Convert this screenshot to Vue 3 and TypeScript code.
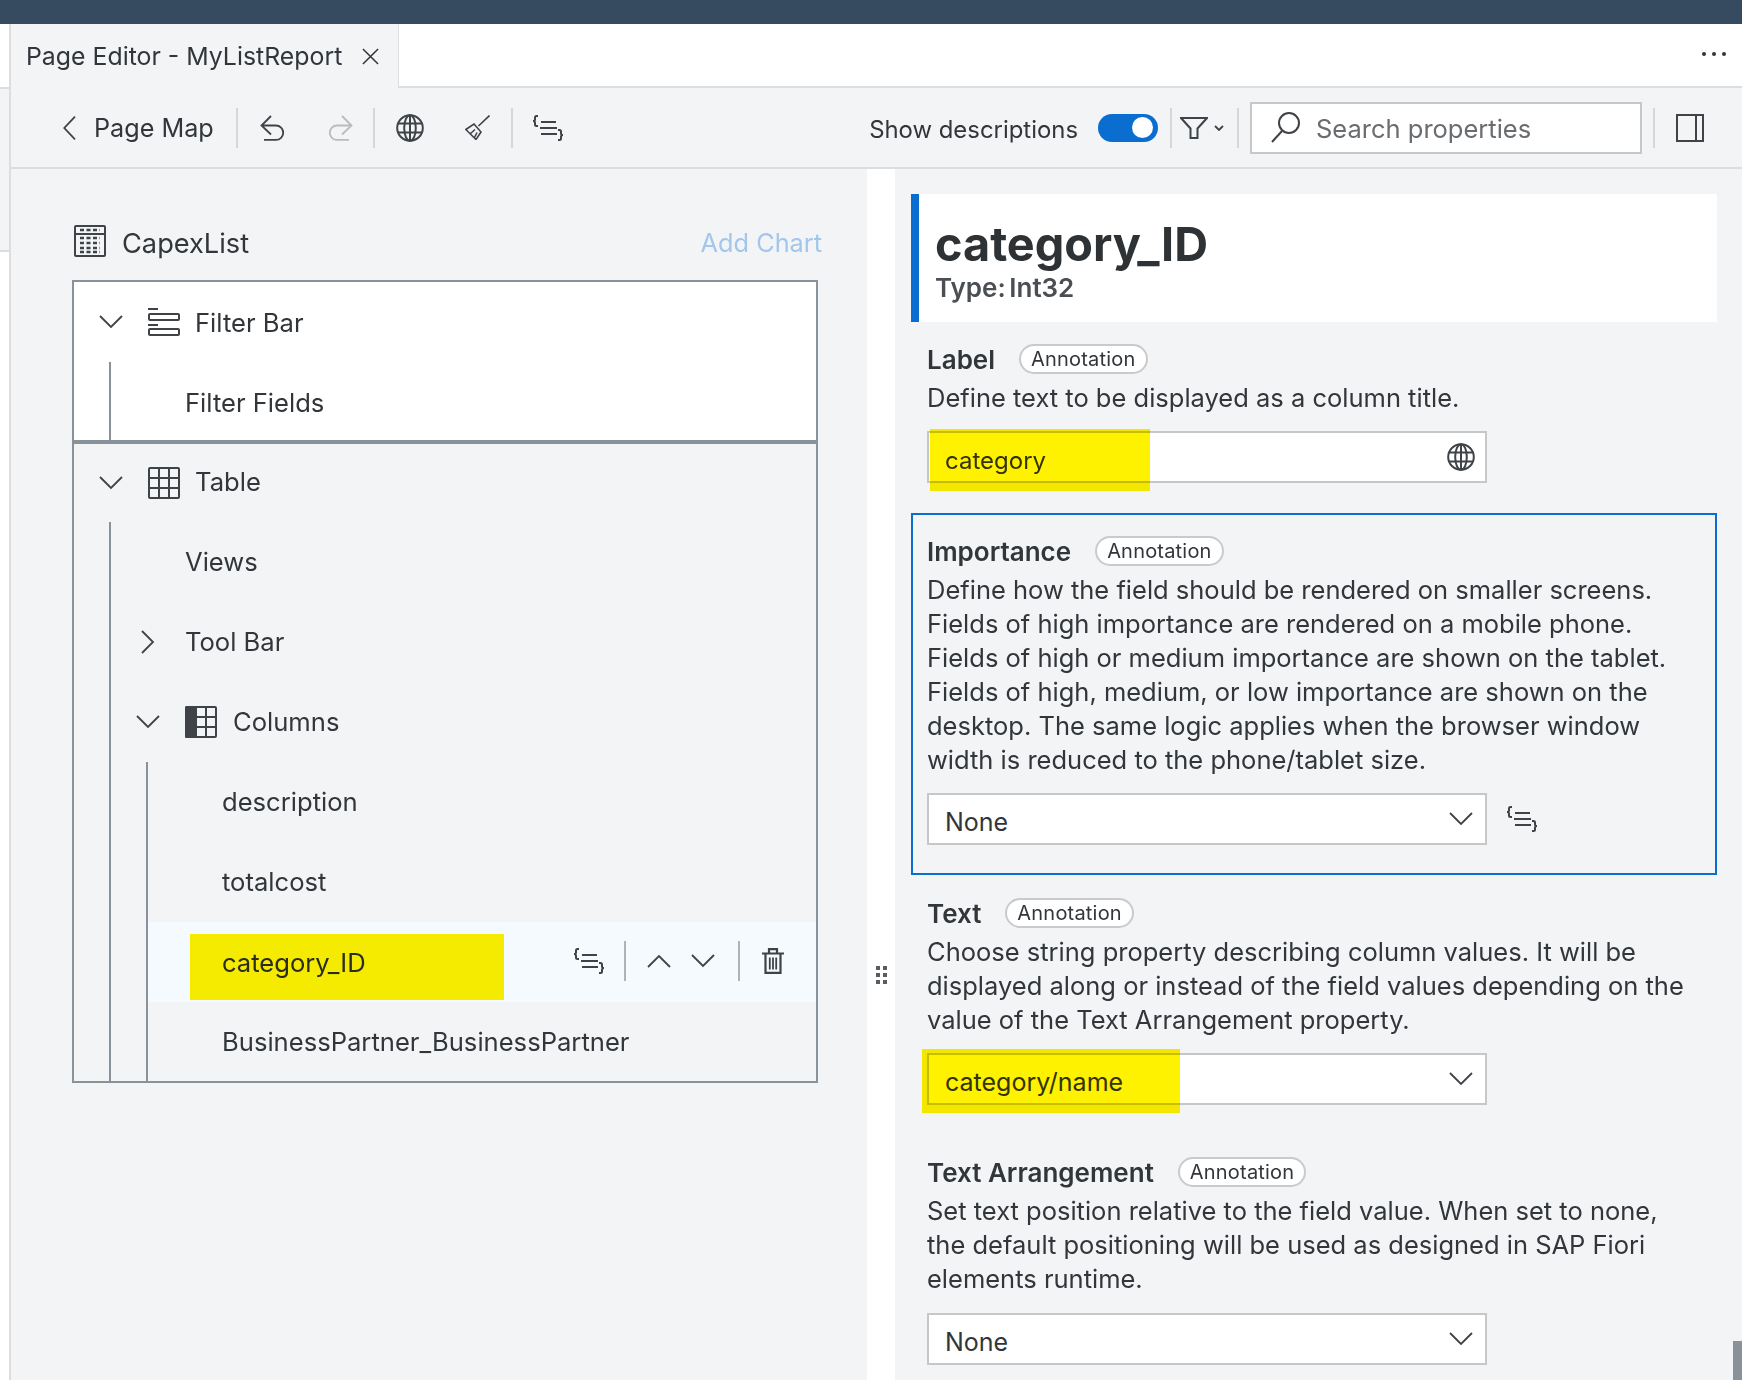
<script setup lang="ts">
interface Row {
  label: string
  depth: number
  chevron?: 'down' | 'right'
  icon?: string
  active?: boolean
}
const filterRows: Row[] = [
  { label: 'Filter Bar', depth: 0, chevron: 'down', icon: 'i-filterbar' },
  { label: 'Filter Fields', depth: 1 },
]
const tableRows: Row[] = [
  { label: 'Table', depth: 0, chevron: 'down', icon: 'i-table' },
  { label: 'Views', depth: 1 },
  { label: 'Tool Bar', depth: 1, chevron: 'right' },
  { label: 'Columns', depth: 1, chevron: 'down', icon: 'i-columns' },
  { label: 'description', depth: 2 },
  { label: 'totalcost', depth: 2 },
  { label: 'category_ID', depth: 2, active: true },
  { label: 'BusinessPartner_BusinessPartner', depth: 2 },
]
</script>

<template>
  <div class="page">
    <svg class="defs" width="0" height="0" aria-hidden="true">
      <symbol id="i-code" viewBox="0 0 32 26">
        <g fill="none" stroke="currentColor" stroke-width="2">
          <path d="M6 1H4.500C3.500 1 3 1.500 3 2.500v2C3 5.500 2 6 1 6c1 0 2 .5 2 1.500v2C3 10.500 3.500 11 4.500 11H6"/>
          <path d="M9 7h15M8 13h17M9 19h16"/>
          <path d="M26 15h1.500c1 0 1.500.5 1.500 1.500v2c0 1 1 1.500 2 1.500-1 0-2 .5-2 1.500v2c0 1-.5 1.500-1.500 1.500H26"/>
        </g>
      </symbol>
      <symbol id="i-globe" viewBox="0 0 28 28">
        <g fill="none" stroke="currentColor" stroke-width="2">
          <circle cx="14" cy="14" r="12.800"/>
          <ellipse cx="14" cy="14" rx="5.800" ry="12.800"/>
          <path d="M14 1.400v25.200M2.500 9.500h23M2.500 18.500h23"/>
        </g>
      </symbol>
      <symbol id="i-chev-down" viewBox="0 0 24 14">
        <path d="M1 1l11 11L23 1" fill="none" stroke="currentColor" stroke-width="1.800"/>
      </symbol>
      <symbol id="i-filterbar" viewBox="0 0 32 28">
        <g fill="none" stroke="currentColor" stroke-width="2">
          <path d="M0 1h10M0 17h10"/>
          <rect x="1" y="6" width="30" height="6" rx="1"/>
          <rect x="1" y="21" width="30" height="6" rx="1"/>
        </g>
      </symbol>
      <symbol id="i-table" viewBox="0 0 32 32">
        <g fill="none" stroke="currentColor" stroke-width="2">
          <rect x="1" y="1" width="30" height="30" rx="1"/>
          <path d="M11 1v30M21 1v30M1 11h30M1 21h30"/>
        </g>
      </symbol>
      <symbol id="i-columns" viewBox="0 0 32 32">
        <rect x="0" y="0" width="12" height="32" rx="1.500" fill="currentColor"/>
        <g fill="none" stroke="currentColor" stroke-width="2">
          <rect x="1" y="1" width="30" height="30" rx="1"/>
          <path d="M21 1v30M11 11h20M11 21h20"/>
        </g>
      </symbol>
    </svg>

    <div class="topbar"></div>

    <div class="workspace">
      <div class="gutter">
        <div class="gutter-top"></div>
        <div class="gutter-mid"></div>
      </div>

      <div class="editor">
        <div class="tabstrip">
          <div class="tab">
            <span>Page Editor - MyListReport</span>
            <svg class="tab-close" viewBox="0 0 18 18"><path d="M1 1l16 16M17 1L1 17" fill="none" stroke="currentColor" stroke-width="1.600"/></svg>
          </div>
          <div class="tab-rest">
            <span class="more"><i></i><i></i><i></i></span>
          </div>
        </div>

        <div class="toolbar">
          <div class="tools-left">
            <button class="backlink">
              <svg class="back-chev" viewBox="0 0 13 24"><path d="M12 .7L1.300 12 12 23.300" fill="none" stroke="currentColor" stroke-width="1.800"/></svg>
              <span>Page Map</span>
            </button>
            <span class="sep"></span>
            <svg class="undo" viewBox="0 0 24 26"><path d="M11 1L1.500 10.500 11 19.500M1.500 10.500H16a7.200 7.200 0 0 1 0 14.400H4" fill="none" stroke="currentColor" stroke-width="1.800"/></svg>
            <svg class="redo" viewBox="0 0 24 26"><path d="M13 1l9.500 9.500-9.500 9M22.500 10.500H8a7.200 7.200 0 0 0 0 14.400h12" fill="none" stroke="currentColor" stroke-width="1.800"/></svg>
            <span class="sep"></span>
            <svg class="globe"><use href="#i-globe"/></svg>
            <svg class="broom" viewBox="0 0 25 25"><path d="M24.500.5L13.500 11M.8 14.500L9 9l7 8-5 7.500zM5 19l5-4.500M9.500 22.500l2.500-5" fill="none" stroke="currentColor" stroke-width="1.600"/></svg>
            <span class="sep"></span>
            <svg class="code"><use href="#i-code"/></svg>
          </div>

          <div class="tools-right">
            <span class="show">Show descriptions</span>
            <span class="toggle"><span class="knob"></span></span>
            <span class="sep"></span>
            <span class="funnel">
              <svg class="funnel-icon" viewBox="0 0 28 22"><path d="M1 1h26L17.500 11.500V21h-7V11.500z" fill="none" stroke="currentColor" stroke-width="2"/></svg>
              <svg class="funnel-chev" viewBox="0 0 10 6"><path d="M1 1l4 4 4-4" fill="none" stroke="currentColor" stroke-width="1.800"/></svg>
            </span>
            <span class="sep"></span>
            <label class="search">
              <svg class="search-icon" viewBox="0 0 29 31"><g fill="none" stroke="currentColor" stroke-width="2"><circle cx="18" cy="11" r="10"/><path d="M11 19L1 30"/></g></svg>
              <span>Search properties</span>
            </label>
            <span class="sep"></span>
            <svg class="panel" viewBox="0 0 28 28"><g fill="none" stroke="currentColor" stroke-width="2"><rect x="1" y="1" width="26" height="26"/><path d="M20 1v26"/></g></svg>
          </div>
        </div>

        <div class="content">
          <section class="left">
            <div class="list-head">
              <svg class="list-icon" viewBox="0 0 32 32">
                <rect x="1" y="1" width="30" height="30" rx="1" fill="none" stroke="currentColor" stroke-width="2"/>
                <path d="M1 9h30" stroke="currentColor" stroke-width="2"/>
                <path d="M6 5h20M6 13h20M6 18h20M6 23h20M6 27h20" stroke="currentColor" stroke-width="2.500" stroke-dasharray="4 2.500" fill="none"/>
              </svg>
              <span class="list-title">CapexList</span>
              <span class="add-chart">Add Chart</span>
            </div>

            <div class="tree">
              <div class="group group-filter">
                <div v-for="r in filterRows" :key="r.label" class="row" :class="'depth-' + r.depth">
                  <span v-if="r.depth > 0" class="guide guide-1"></span>
                  <svg v-if="r.chevron === 'down'" class="chev"><use href="#i-chev-down"/></svg>
                  <svg v-if="r.icon" class="row-icon" :class="r.icon"><use :href="'#' + r.icon"/></svg>
                  <span class="row-label">{{ r.label }}</span>
                </div>
              </div>
              <div class="group group-table">
                <div
                  v-for="r in tableRows"
                  :key="r.label"
                  class="row"
                  :class="['depth-' + r.depth, { active: r.active, 'has-icon': r.icon, 'has-right': r.chevron === 'right' }]"
                >
                  <span v-if="r.depth > 0" class="guide guide-1"></span>
                  <span v-if="r.depth > 1" class="guide guide-2"></span>
                  <svg v-if="r.chevron === 'down'" class="chev"><use href="#i-chev-down"/></svg>
                  <svg v-if="r.chevron === 'right'" class="chev-right" viewBox="0 0 14 24"><path d="M1 1l11 11L1 23" fill="none" stroke="currentColor" stroke-width="1.800"/></svg>
                  <svg v-if="r.icon" class="row-icon"><use :href="'#' + r.icon"/></svg>
                  <span class="row-label">{{ r.label }}</span>
                  <template v-if="r.active">
                    <span class="row-mark"></span>
                    <span class="row-actions">
                      <svg class="act-code"><use href="#i-code"/></svg>
                      <span class="act-sep"></span>
                      <svg class="act-chev flip"><use href="#i-chev-down"/></svg>
                      <svg class="act-chev"><use href="#i-chev-down"/></svg>
                      <span class="act-sep"></span>
                      <svg class="act-trash" viewBox="0 0 22 26"><g fill="none" stroke="currentColor" stroke-width="2.200"><path d="M0 5.500h22M7 5V1.100h8V5M3.500 5.500v19.400h15V5.500"/><path d="M7.800 9.500v12M11 9.500v12M14.200 9.500v12" stroke-width="1.800"/></g></svg>
                    </span>
                  </template>
                </div>
              </div>
            </div>
          </section>

          <div class="splitter">
            <span class="grip"><i></i><i></i><i></i><i></i><i></i><i></i></span>
          </div>

          <section class="right">
            <header class="prop-head">
              <h1>category_ID</h1>
              <p>Type: <b>Int32</b></p>
            </header>

            <div class="prop prop-label">
              <div class="prop-title"><strong>Label</strong><span class="pill">Annotation</span></div>
              <p class="desc">Define text to be displayed as a column title.</p>
              <div class="field-row">
                <div class="field">
                  <span class="value-narrow">category</span>
                  <svg class="field-globe"><use href="#i-globe"/></svg>
                  <span class="mark mark-label"></span>
                </div>
              </div>
            </div>

            <div class="prop prop-focus">
              <div class="prop-title"><strong>Importance</strong><span class="pill">Annotation</span></div>
              <p class="desc">Define how the field should be rendered on smaller screens. Fields of high importance are rendered on a mobile phone. Fields of high or medium importance are shown on the tablet. Fields of high, medium, or low importance are shown on the desktop. The same logic applies when the browser window width is reduced to the phone/tablet size.</p>
              <div class="field-row">
                <div class="field">
                  <span>None</span>
                  <svg class="field-chev"><use href="#i-chev-down"/></svg>
                </div>
                <svg class="field-code"><use href="#i-code"/></svg>
              </div>
            </div>

            <div class="prop prop-text">
              <div class="prop-title"><strong>Text</strong><span class="pill">Annotation</span></div>
              <p class="desc">Choose string property describing column values. It will be displayed along or instead of the field values depending on the value of the Text Arrangement property.</p>
              <div class="field-row">
                <div class="field">
                  <span>category/name</span>
                  <svg class="field-chev"><use href="#i-chev-down"/></svg>
                  <span class="mark mark-text"></span>
                </div>
              </div>
            </div>

            <div class="prop prop-arr">
              <div class="prop-title"><strong>Text Arrangement</strong><span class="pill">Annotation</span></div>
              <p class="desc">Set text position relative to the field value. When set to none, the default positioning will be used as designed in SAP Fiori elements runtime.</p>
              <div class="field-row">
                <div class="field">
                  <span>None</span>
                  <svg class="field-chev"><use href="#i-chev-down"/></svg>
                </div>
              </div>
            </div>

            <span class="scroll-thumb"></span>
          </section>
        </div>
      </div>
    </div>
  </div>
</template>

<style>
html, body { margin: 0; background: #fff; }
</style>

<style scoped>
.page {
  width: 1742px;
  height: 1380px;
  overflow: hidden;
  display: flex;
  flex-direction: column;
  font-family: Inter, "Liberation Sans", sans-serif;
  font-size: 25px;
  color: #32363a;
  background: #fff;
}
.defs { position: absolute; }
svg { display: block; flex: none; }
.topbar { height: 24px; background: #364b60; flex: none; }
.workspace { flex: 1; display: flex; min-height: 0; }
.gutter { width: 11px; flex: none; }
.gutter-top { height: 63px; }
.gutter-mid { height: 161px; background: #f3f4f6; border-top: 2px solid #dcdddf; border-bottom: 2px solid #dcdddf; }
.editor { flex: 1; display: flex; flex-direction: column; min-width: 0; border-left: 2px solid #dcdddf; margin-left: -2px; }

.tabstrip { height: 64px; display: flex; flex: none; }
.tab {
  width: 388px;
  background: #f3f4f6;
  display: flex;
  align-items: center;
  padding-left: 15px;
  box-sizing: border-box;
  border-right: 1px solid #dcdddf;
  height: 64px;
  font-size: 24.85px;
}
.tab-close { width: 17px; height: 17px; margin-left: 20px; }
.tab-rest {
  flex: 1;
  border-bottom: 2px solid #dcdddf;
  display: flex;
  justify-content: flex-end;
  align-items: center;
  padding-right: 16px;
}
.more { display: flex; gap: 6px; margin-top: -2px; }
.more i { width: 4px; height: 4px; border-radius: 50%; background: #32363a; }

.toolbar {
  height: 81px;
  flex: none;
  box-sizing: border-box;
  background: #f3f4f6;
  border-bottom: 2px solid #dcdddf;
  display: flex;
  justify-content: space-between;
  align-items: center;
}
.tools-left, .tools-right { display: flex; align-items: center; }
.tools-left { padding-left: 52px; }
.tools-right { padding-right: 38px; }
.backlink {
  all: unset;
  display: flex;
  align-items: center;
  gap: 18px;
  margin-right: 22px;
  font-size: 25.2px;
}
.back-chev { width: 13px; height: 24px; color: #3f4347; }
.sep { width: 2px; height: 40px; background: #d6d7d9; flex: none; }
.undo { width: 24px; height: 26px; margin: 0 45px 0 22px; color: #3f4347; }
.redo { width: 24px; height: 26px; margin-right: 20px; color: #b9bbbd; }
.globe { width: 28px; height: 28px; margin: 0 41px 0 21px; color: #3f4347; }
.broom { width: 25px; height: 25px; margin-right: 21px; color: #3f4347; }
.code { width: 32px; height: 26px; margin-left: 19px; color: #3f4347; }

.show { margin-right: 20px; font-size: 23.9px; margin-top: 3px; }
.toggle {
  width: 60px;
  height: 28px;
  border-radius: 14px;
  background: #0a6ed1;
  display: flex;
  align-items: center;
  justify-content: flex-end;
  padding: 0 5px;
  box-sizing: border-box;
  margin-right: 12px;
}
.knob { width: 21px; height: 21px; border-radius: 50%; background: #fff; }
.funnel { display: flex; align-items: center; width: 65px; padding-left: 8px; box-sizing: border-box; gap: 6px; color: #3f4347; }
.funnel-icon { width: 28px; height: 22px; }
.funnel-chev { width: 10px; height: 6px; margin-top: 1px; }
.search {
  width: 392px;
  height: 52px;
  box-sizing: border-box;
  border: 2px solid #c6c7c9;
  background: #fff;
  margin: 0 11px;
  display: flex;
  align-items: center;
  padding-left: 19px;
  gap: 16px;
  color: #6a6d70;
  font-size: 25.5px;
}
.search span { padding-top: 2px; }
.search-icon { width: 29px; height: 31px; color: #3f4347; }
.panel { width: 28px; height: 28px; margin-left: 21px; color: #3f4347; }

.content { flex: 1; display: flex; min-height: 0; }
.left { width: 856px; flex: none; background: #f3f4f6; box-sizing: border-box; padding: 0 50px 0 61px; font-size: 25.6px; }
.list-head { display: flex; align-items: center; height: 111px; }
.list-icon { width: 32px; height: 32px; margin: 33px 16px 0 2px; color: #3f4347; }
.list-title { margin-top: 38px; font-size: 27.2px; }
.add-chart { margin-left: auto; margin-top: 36px; color: #a2c6ec; margin-right: -5px; font-size: 25.3px; }

.tree { border: 2px solid #89919a; width: 746px; box-sizing: border-box; }
.group-filter { background: #fff; border-bottom: 4px solid #89919a; }
.group-filter .row:last-child { height: 78px; padding-top: 3px; box-sizing: border-box; }
.group-table .row:first-child { height: 78px; }
.group-table .row:last-child { height: 79px; }
.group-table .row:first-child .row-label { top: -2px; }
.group-table .row:not(:first-child):not(.active):not(:last-child) .row-label { top: -1px; }
.row { position: relative; height: 80px; display: flex; align-items: center; }
.row-label { white-space: nowrap; position: relative; }
.chev { width: 24px; height: 14px; margin-left: 25px; color: #3f4347; }
.chev-right { width: 14px; height: 24px; margin-left: 67px; color: #3f4347; }
.row-icon { width: 32px; height: 32px; margin-left: 25px; color: #3f4347; }
.row.depth-0 .row-label { margin-left: 15px; }
.row.depth-1 > .row-label { margin-left: 111px; }
.row.has-right > .row-label { margin-left: 30px; }
.row.depth-1.has-icon .chev { margin-left: 62px; }
.row.depth-1.has-icon .row-label { margin-left: 16px; }
.row.depth-2 > .row-label { margin-left: 148px; }
.guide { position: absolute; top: 0; bottom: 0; width: 2px; background: #89919a; z-index: 1; }
.guide-1 { left: 35px; }
.guide-2 { left: 72px; }
.row.active::before { content: ""; position: absolute; left: 74px; right: 0; top: 0; bottom: 0; background: #f5faff; }
.row-mark { position: absolute; left: 116px; top: 12px; width: 314px; height: 66px; background: #f5eb00; }
.row.active > .row-label { z-index: 1; color: #2a2c20; }
.row-actions { margin-left: auto; display: flex; align-items: center; position: relative; margin-top: -2px; color: #3f4347; }
.act-code { width: 32px; height: 26px; margin-right: 19px; }
.act-sep { width: 2px; height: 40px; background: #b0b3b6; }
.act-chev { width: 24px; height: 14px; margin-left: 20px; }
.act-chev.flip { transform: rotate(180deg); margin-left: 21px; }
.act-chev + .act-sep { margin-left: 23px; }
.act-trash { width: 22px; height: 26px; margin-left: 22px; margin-right: 32px; }

.splitter { width: 28px; flex: none; background: #fff; display: flex; align-items: flex-start; justify-content: center; box-sizing: border-box; padding-top: 797px; }
.grip { display: grid; grid-template-columns: 4px 4px; gap: 3px; }
.grip i { width: 4px; height: 4px; background: #5a5d60; }

.right { flex: 1; min-width: 0; background: #f3f4f6; padding: 25px 25px 0 16px; position: relative; font-size: 25.5px; }
.prop-head { background: #fff; border-left: 8px solid #0a6ed1; height: 128px; box-sizing: border-box; padding: 24px 0 0 16px; }
.prop-head h1 { margin: 0; font-size: 46.8px; line-height: 52px; font-weight: 700; color: #2f3235; }
.prop-head p { margin: 0; padding-top: 2px; font-size: 26px; line-height: 32px; font-weight: 600; color: #4b4f53; word-spacing: -3px; }
.prop-head b { font-weight: 600; }
.prop { box-sizing: border-box; padding-left: 16px; }
.prop-label { padding-top: 21px; height: 191px; }
.prop-focus { height: 362px; border: 2px solid #0a6ed1; padding-left: 14px; padding-top: 20px; }
.prop-text { padding-top: 22px; height: 258px; }
.prop-arr { padding-top: 23px; }
.prop-arr .field-row { margin-top: 17px; }
.prop-title { display: flex; align-items: center; height: 32px; }
.prop-title strong { font-weight: 600; font-size: 26px; color: #32363a; }
.pill {
  margin-left: 24px;
  height: 30px;
  box-sizing: border-box;
  border: 2px solid #c9cacc;
  border-radius: 15px;
  padding: 0 10px;
  font-size: 20px;
  line-height: 26px;
  background: #fff;
  letter-spacing: 0.2px;
}
.desc { margin: 6px 0 0; line-height: 34px; width: 765px; }
.field-row { display: flex; align-items: center; margin-top: 16px; }
.field {
  position: relative;
  width: 560px;
  height: 52px;
  box-sizing: border-box;
  border: 2px solid #c6c7c9;
  background: #fff;
  display: flex;
  align-items: center;
  justify-content: space-between;
  padding: 6px 12px 0 16px;
  font-size: 25px;
}
.value-narrow { font-size: 24px; }
.field-globe { width: 28px; height: 28px; color: #3f4347; margin: -6px -2px 0 0; }
.field-chev { width: 24px; height: 14px; color: #3f4347; margin-top: -6px; }
.field-code { width: 32px; height: 26px; margin-left: 19px; color: #3f4347; }
.mark { position: absolute; mix-blend-mode: multiply; background: #fff200; }
.mark-label { left: 1px; top: -4px; width: 220px; height: 62px; }
.mark-text { left: -7px; top: -6px; width: 258px; height: 64px; }
.scroll-thumb { position: absolute; right: 0; bottom: 0; width: 9px; height: 39px; background: #89919a; }
</style>
